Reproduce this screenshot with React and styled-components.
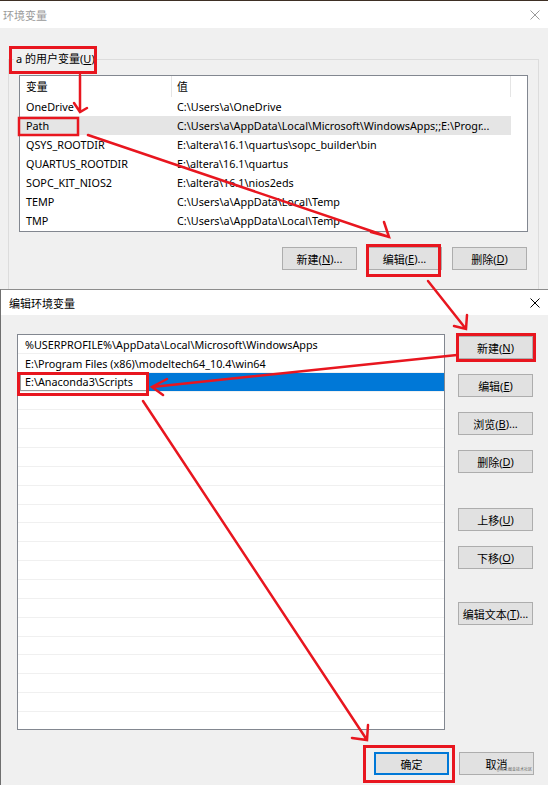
import React from "react";
import styled, { createGlobalStyle } from "styled-components";

const GlobalStyle = createGlobalStyle`
  html, body { margin: 0; padding: 0; }
  body {
    background: #3e2f24;
    font-family: "Noto Sans", "Noto Sans CJK SC", sans-serif;
    font-size: 10.8px;
    color: #000;
  }
  #root { width: 548px; height: 785px; }
  * { box-sizing: border-box; }
`;

const Screen = styled.div`
  position: relative;
  width: 548px;
  height: 785px;
  overflow: hidden;
  display: flex;
  flex-direction: column;
  padding-top: 1px;
`;

const Window = styled.section`
  display: flex;
  flex-direction: column;
  background: #f0f0f0;
  overflow: hidden;
  flex: ${(p) => (p.$fill ? "1" : "none")};
  height: ${(p) => (p.$fill ? "auto" : `${p.$h}px`)};
  border-top: ${(p) => (p.$framed ? "1px solid #8c8c8c" : "none")};
  border-left: ${(p) => (p.$framed ? "1px solid #6f6f6f" : "none")};
`;

const TitleBar = styled.header`
  flex: none;
  height: ${(p) => p.$h}px;
  background: #fff;
  display: flex;
  align-items: center;
  justify-content: space-between;
  padding: 0 8px 0 ${(p) => p.$pl}px;
  color: ${(p) => (p.$inactive ? "#9a9a9a" : "#000")};
  font-size: 11px;
`;

const CloseIcon = ({ color }) => (
  <svg width="10" height="10" viewBox="0 0 10 10">
    <path d="M0.5 0.5 L9.5 9.5 M9.5 0.5 L0.5 9.5" stroke={color} strokeWidth="1" fill="none" />
  </svg>
);

const TopBody = styled.div`
  padding: 0 9px 0 8px;
`;

const GroupBox = styled.fieldset`
  margin: 23px 0 0 0;
  border: 1px solid #dcdcdc;
  padding: 8px 10px 40px 10px;
  min-width: 0;
`;

const GroupLegend = styled.legend`
  padding: 0 2px;
  margin-left: -5px;
  line-height: 16px;
  font-size: 11px;
`;

const VarList = styled.div`
  border: 1px solid #828790;
  background: #fff;
  height: 157px;
  overflow: hidden;
`;

const VarRow = styled.div`
  display: grid;
  grid-template-columns: 152px 339px 1fr;
  height: ${(p) => (p.$head ? 21 : 19)}px;
  line-height: ${(p) => (p.$head ? 21 : 19)}px;
`;

const VarCell = styled.div`
  white-space: nowrap;
  overflow: hidden;
  padding-left: ${(p) => p.$pl}px;
  background: ${(p) => (p.$sel ? "#e5e5e5" : "transparent")};
  border-right: ${(p) => (p.$divider ? "1px solid #e5e5e5" : "none")};
`;

const ButtonRow = styled.div`
  display: flex;
  justify-content: flex-end;
  gap: 10px;
  margin: 15px 1px 0 0;
`;

const Button = styled.button`
  width: 75px;
  height: 23px;
  flex: none;
  padding: 0;
  margin: ${(p) => (p.$extra ? `${p.$extra}px 0 0 0` : "0")};
  background: #e1e1e1;
  border: 1px solid ${(p) => (p.$primary ? "#0078d7" : "#adadad")};
  box-shadow: ${(p) => (p.$primary ? "inset 0 0 0 1px #0078d7" : "none")};
  font-family: inherit;
  font-size: 11px;
  color: #000;
  display: flex;
  align-items: center;
  justify-content: center;
  white-space: nowrap;
  border-radius: 0;
`;

const EditBody = styled.div`
  flex: 1;
  display: flex;
  flex-direction: column;
  padding: 19px 14px 0 16px;
`;

const MainArea = styled.div`
  display: flex;
  gap: 13px;
`;

const PathList = styled.div`
  width: 428px;
  height: 396px;
  border: 1px solid #828790;
  background: #fff;
  overflow: hidden;
`;

const PathRow = styled.div`
  height: 18.85px;
  border-bottom: 1px solid #f0f0f0;
  line-height: 18px;
  padding-left: ${(p) => (p.$sel ? 2 : 7)}px;
  padding-top: ${(p) => (p.$sel ? 0 : 2)}px;
  white-space: nowrap;
  background: ${(p) => (p.$sel ? "#0078d7" : "transparent")};
  display: flex;
  align-items: center;
`;

const EditBox = styled.div`
  width: 127px;
  height: 18px;
  background: #fff;
  border: 1px solid #9a9a9a;
  padding-left: 4px;
  line-height: 16px;
`;

const ButtonColumn = styled.div`
  display: flex;
  flex-direction: column;
  gap: 15px;
  padding-top: 2px;
`;

const Footer = styled.div`
  display: flex;
  justify-content: flex-end;
  gap: 10px;
  margin-top: 22px;
`;

const Watermark = styled.div`
  position: absolute;
  right: 16px;
  bottom: 13px;
  font-size: 10px;
  color: #555;
  white-space: nowrap;
  transform: scale(0.4);
  transform-origin: right bottom;
  text-shadow: 0 0 1px #fff;
`;

const Overlay = styled.svg`
  position: absolute;
  left: 0;
  top: 0;
  pointer-events: none;
`;

const vars = [
  ["OneDrive", "C:\\Users\\a\\OneDrive"],
  ["Path", "C:\\Users\\a\\AppData\\Local\\Microsoft\\WindowsApps;;E:\\Progr..."],
  ["QSYS_ROOTDIR", "E:\\altera\\16.1\\quartus\\sopc_builder\\bin"],
  ["QUARTUS_ROOTDIR", "E:\\altera\\16.1\\quartus"],
  ["SOPC_KIT_NIOS2", "E:\\altera\\16.1\\nios2eds"],
  ["TEMP", "C:\\Users\\a\\AppData\\Local\\Temp"],
  ["TMP", "C:\\Users\\a\\AppData\\Local\\Temp"],
];

const paths = [
  "%USERPROFILE%\\AppData\\Local\\Microsoft\\WindowsApps",
  "E:\\Program Files (x86)\\modeltech64_10.4\\win64",
];

const RED = "#e8161f";

export default function App() {
  const empty = Array.from({ length: 19 });
  return (
    <Screen>
      <GlobalStyle />
      <Window $h={288}>
        <TitleBar $h={27} $pl={3} $inactive>
          <span>环境变量</span>
          <CloseIcon color="#9a9a9a" />
        </TitleBar>
        <TopBody>
          <GroupBox>
            <GroupLegend>a 的用户变量(<u>U</u>)</GroupLegend>
            <VarList>
              <VarRow $head>
                <VarCell $pl={6} $divider>变量</VarCell>
                <VarCell $pl={5} $divider>值</VarCell>
                <VarCell />
              </VarRow>
              {vars.map(([n, v]) => (
                <VarRow key={n}>
                  <VarCell $pl={6} $sel={n === "Path"}>{n}</VarCell>
                  <VarCell $pl={5} $sel={n === "Path"}>{v}</VarCell>
                  <VarCell />
                </VarRow>
              ))}
            </VarList>
            <ButtonRow>
              <Button>新建(<u>N</u>)...</Button>
              <Button>编辑(<u>E</u>)...</Button>
              <Button>删除(<u>D</u>)</Button>
            </ButtonRow>
          </GroupBox>
        </TopBody>
      </Window>

      <Window $fill $framed>
        <TitleBar $h={25} $pl={8}>
          <span>编辑环境变量</span>
          <CloseIcon color="#000" />
        </TitleBar>
        <EditBody>
          <MainArea>
            <PathList>
              {paths.map((p) => (
                <PathRow key={p}>{p}</PathRow>
              ))}
              <PathRow $sel>
                <EditBox>E:\Anaconda3\Scripts</EditBox>
              </PathRow>
              {empty.map((_, i) => (
                <PathRow key={i} />
              ))}
            </PathList>
            <ButtonColumn>
              <Button>新建(<u>N</u>)</Button>
              <Button>编辑(<u>E</u>)</Button>
              <Button>浏览(<u>B</u>)...</Button>
              <Button>删除(<u>D</u>)</Button>
              <Button $extra={20}>上移(<u>U</u>)</Button>
              <Button>下移(<u>O</u>)</Button>
              <Button $extra={18}>编辑文本(<u>T</u>)...</Button>
            </ButtonColumn>
          </MainArea>
          <Footer>
            <Button $primary>确定</Button>
            <Button>取消</Button>
          </Footer>
        </EditBody>
      </Window>

      <Watermark>@稀土掘金技术社区</Watermark>

      <Overlay width="548" height="785" viewBox="0 0 548 785">
        <g fill="none" stroke={RED} strokeWidth="3">
          <rect x="10.5" y="47.5" width="85" height="25" />
          <rect x="19" y="118" width="59" height="17" strokeWidth="2.5" />
          <rect x="367.5" y="245.5" width="72" height="30" />
          <rect x="457.5" y="334.5" width="77" height="26" />
          <rect x="18.5" y="373.5" width="129" height="21" />
          <rect x="364.5" y="746.5" width="89" height="35" />
        </g>
        <g fill="none" stroke={RED} strokeWidth="2.5" strokeLinecap="round">
          <path d="M80 75 L80 112 M74 103 L80 112 L87 108" />
          <path d="M88 135 L389 237 M384 222 L389 237 L371 232" />
          <path d="M428 281 L466 329 M467 315 L466 329 L454 326" />
          <path d="M457 355 L152 387 M167 379 L152 387 L163 395" />
          <path d="M143 401 L367 740 M368 725 L367 740 L352 738" />
        </g>
      </Overlay>
    </Screen>
  );
}
